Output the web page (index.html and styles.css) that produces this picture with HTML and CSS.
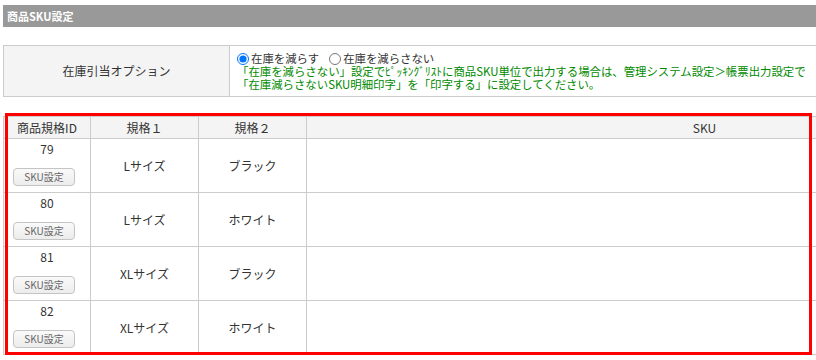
FILE: index.html
```html
<!DOCTYPE html>
<html lang="ja">
<head>
<meta charset="utf-8">
<link rel="stylesheet" href="styles.css">
</head>
<body>
<div class="page">
  <div class="inner">
    <div class="title-bar">商品SKU設定</div>

    <table class="opt-table">
      <tr>
        <th class="opt-label">在庫引当オプション</th>
        <td class="opt-value">
          <div class="radios">
            <label class="radio"><input type="radio" name="stock" checked>在庫を減らす</label>
            <label class="radio"><input type="radio" name="stock">在庫を減らさない</label>
          </div>
          <div class="note">「在庫を減らさない」設定でﾋﾟｯｷﾝｸﾞﾘｽﾄに商品SKU単位で出力する場合は、管理システム設定＞帳票出力設定で<br>「在庫減らさないSKU明細印字」を「印字する」に設定してください。</div>
        </td>
      </tr>
    </table>

    <div class="sku-wrap">
      <table class="sku-table">
        <thead>
          <tr class="head-row">
            <th class="c-id">商品規格ID</th>
            <th class="c-s1">規格１</th>
            <th class="c-s2">規格２</th>
            <th class="c-sku">SKU</th>
          </tr>
        </thead>
        <tbody>
          <tr class="body-row">
            <td class="c-id"><div class="id-num">79</div><button class="sku-btn">SKU設定</button></td>
            <td>Lサイズ</td>
            <td>ブラック</td>
            <td></td>
          </tr>
          <tr class="body-row">
            <td class="c-id"><div class="id-num">80</div><button class="sku-btn">SKU設定</button></td>
            <td>Lサイズ</td>
            <td>ホワイト</td>
            <td></td>
          </tr>
          <tr class="body-row">
            <td class="c-id"><div class="id-num">81</div><button class="sku-btn">SKU設定</button></td>
            <td>XLサイズ</td>
            <td>ブラック</td>
            <td></td>
          </tr>
          <tr class="body-row">
            <td class="c-id"><div class="id-num">82</div><button class="sku-btn">SKU設定</button></td>
            <td>XLサイズ</td>
            <td>ホワイト</td>
            <td></td>
          </tr>
        </tbody>
      </table>
      <div class="highlight"></div>
    </div>
  </div>
</div>
</body>
</html>
```

FILE: styles.css
```css
html, body {
  margin: 0;
  padding: 0;
  background: #fff;
}
body {
  font-family: "Noto Sans CJK JP", "Noto Sans", sans-serif;
  font-size: 12px;
  line-height: 14px;
  color: #333;
}
.page {
  width: 816px;
  height: 360px;
  overflow: hidden;
}
.inner {
  width: 1100px;
  padding: 5px 0 0 3px;
}
.title-bar {
  height: 22px;
  line-height: 22px;
  background: #999;
  color: #fff;
  font-weight: bold;
  font-size: 11px;
  padding-left: 4px;
}
.opt-table {
  margin-top: 18px;
  width: 100%;
  border-collapse: collapse;
}
.opt-table th, .opt-table td {
  border: 1px solid #ccc;
}
.opt-label {
  width: 225px;
  height: 50px;
  background: #f3f4f3;
  font-weight: normal;
  text-align: center;
  padding: 0;
}
.opt-value {
  padding: 5px 7px 4px;
  line-height: 13px;
  vertical-align: middle;
  font-size: 11.4px;
}
.radios {
  display: flex;
  gap: 10px;
}
.radio {
  display: inline-flex;
  align-items: center;
}
.radio input {
  margin: 0 2px 0 0;
  width: 12px;
  height: 12px;
}
.note {
  color: #008a00;
  white-space: nowrap;
}
.sku-wrap {
  position: relative;
  margin-top: 19px;
}
.sku-table {
  width: 100%;
  border-collapse: collapse;
  table-layout: fixed;
}
.sku-table th, .sku-table td {
  border: 1px solid #ccc;
  text-align: center;
  padding: 0;
  line-height: 14px;
}
.sku-table th {
  background: #f3f4f3;
  font-weight: normal;
}
.head-row { height: 22px; }
.body-row { height: 54px; }
.sku-table td {
  vertical-align: middle;
}
.c-id { width: 86px; }
.c-s1 { width: 107px; }
.c-s2 { width: 107px; }
.sku-table td.c-id {
  vertical-align: top;
  padding-top: 3px;
}
.id-num {
  line-height: 14px;
  height: 14px;
}
.sku-btn {
  display: block;
  margin: 12px auto 0 9px;
  width: 62px;
  height: 18px;
  padding: 0;
  font-family: inherit;
  font-size: 10px;
  line-height: 16px;
  color: #666;
  border: 1px solid #c4c4c4;
  border-radius: 4px;
  background: linear-gradient(#fafafa, #ececec);
}
.highlight {
  position: absolute;
  left: 2px;
  top: -3px;
  width: 801px;
  height: 236px;
  border: 3px solid #f00;
  pointer-events: none;
}
```
